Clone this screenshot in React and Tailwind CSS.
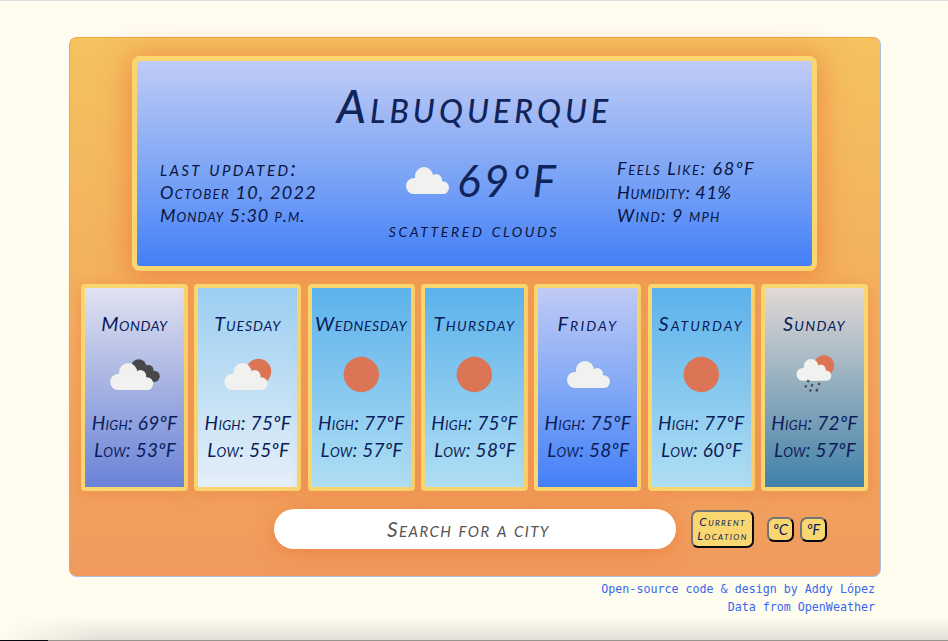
const HAND = "font-['Lato',sans-serif] italic [font-variant-caps:small-caps]";

function CloudShape({ transform }) {
  return (
    <g transform={transform} fill="#f1f1f0">
      <rect x="0" y="11" width="28" height="16" rx="8" />
      <rect x="16" y="14.200" width="27" height="12.800" rx="6.400" />
      <circle cx="18" cy="9" r="9" />
      <circle cx="30.200" cy="12.700" r="5.700" />
      <rect x="9" y="9" width="18" height="14" />
      <rect x="24" y="12.500" width="11.900" height="9" />
    </g>
  );
}

function Cloud() {
  return (
    <svg className="h-[27px] w-[43px]" viewBox="0 0 43 27">
      <CloudShape />
    </svg>
  );
}

function Icon({ kind }) {
  return (
    <svg className="h-[40px] w-[56px]" viewBox="0 0 56 40">
      {kind === "sun" && <circle cx="28.300" cy="20.500" r="17.700" fill="#dc7555" />}
      {kind === "cloud" && <CloudShape transform="translate(7 7)" />}
      {kind === "broken" && (
        <>
          <g fill="#48484a">
            <circle cx="31.800" cy="12.500" r="7.300" />
            <circle cx="41.500" cy="16" r="5" />
            <circle cx="47.200" cy="22.300" r="5.600" />
            <path d="M32 7 43 13 46 27.500 36 24Z" />
          </g>
          <CloudShape transform="translate(3.200 9)" />
        </>
      )}
      {kind === "few" && (
        <>
          <circle cx="38.500" cy="17.500" r="12.700" fill="#dc7555" />
          <CloudShape transform="translate(4.500 9)" />
        </>
      )}
      {kind === "rain" && (
        <>
          <circle cx="38" cy="11.500" r="10.200" fill="#dc7555" />
          <CloudShape transform="translate(10.500 5) scale(.81)" />
          <path
            d="M22.600 26l-.8 2.200M20.300 31.200l-1 2.300M26.500 30.200l-1 2.500M33.500 28.800l-.8 2.200M24.800 35.500l-.8 2M31.300 35l-1 2.500"
            stroke="#48484a"
            strokeWidth="2.200"
          />
        </>
      )}
    </svg>
  );
}

const CLEAR = "from-[#5bb2ec] via-[#86c8ef] to-[#afdef3]";

const DAYS = [
  { name: "Monday", track: "tracking-[0.5px]", icon: "broken", hi: 69, lo: 53, bg: "from-[#e1e3f1] via-[#a5b1e1] to-[#6a83d8]" },
  { name: "Tuesday", track: "tracking-[0.9px]", icon: "few", hi: 75, lo: 55, bg: "from-[#9ccef2] via-[#c0dff4] to-[#e5eff9]" },
  { name: "Wednesday", track: "tracking-[0.6px]", icon: "sun", hi: 77, lo: 57, bg: CLEAR },
  { name: "Thursday", track: "tracking-[1.300px]", icon: "sun", hi: 75, lo: 58, bg: CLEAR },
  { name: "Friday", track: "tracking-[2.100px]", icon: "cloud", hi: 75, lo: 58, bg: "from-[#c0cbf5] via-[#82a8f5] to-[#437ff7]" },
  { name: "Saturday", track: "tracking-[2px]", icon: "sun", hi: 77, lo: 60, bg: CLEAR },
  { name: "Sunday", track: "tracking-[1.300px]", icon: "rain", hi: 72, lo: 57, bg: "from-[#e2d9d6] via-[#91adbe] to-[#3f80a8]" },
];

function DayCard({ day }) {
  return (
    <div
      className={`flex h-[207px] w-[107px] flex-col items-center rounded-[4px] border-4 border-[#f9d66f] bg-linear-to-b pt-[21px] whitespace-nowrap text-[#0b1c5a] shadow-[0_3px_15px_rgba(238,128,64,0.6)] ${day.bg}`}
    >
      <div className={`h-[28px] text-[20px] leading-[28px] ${day.track}`}>{day.name}</div>
      <div className="mt-[17px] h-[40px]">
        <Icon kind={day.icon} />
      </div>
      <div className="mt-[15px] text-[19px] leading-[27px] tracking-[0.3px]">High: {day.hi}ºF</div>
      <div className="pl-[1px] text-[19px] leading-[27px] tracking-[0.3px]">Low: {day.lo}ºF</div>
    </div>
  );
}

const BUTTON =
  "flex items-center justify-center border-2 border-t-[#747474] border-l-[#747474] border-r-[#0a0a12] border-b-[#0a0a12] bg-[#f9d66f] text-[#0b1c5a] [font-variant-caps:small-caps] italic";

export default function App() {
  return (
    <div className="flex h-[641px] w-[948px] flex-col overflow-hidden border-t border-[#dedede] bg-[#fffcf0]">
      <div
        className={`mt-[36px] ml-[69px] flex h-[540px] w-[812px] shrink-0 flex-col rounded-[8px] border border-t-[#f0a546] border-l-[#f0a546] border-r-[#a9c0e0] border-b-[#a9c0e0] bg-linear-to-b from-[#f5c25e] to-[#f09a5e] ${HAND}`}
      >
        <div className="mt-[18px] ml-[62px] flex h-[215px] w-[685px] shrink-0 flex-col rounded-[8px] border-[5px] border-[#f9d66f] bg-linear-to-b from-[#c0cbf5] via-[#82a8f5] to-[#437ff7] whitespace-nowrap text-[#0a1440] shadow-[0_3px_28px_4px_rgba(238,120,60,0.7)]">
          <h1 className="mt-[19px] h-[52px] text-center text-[46px] leading-[52px] font-medium tracking-[4.100px] text-[#10245a]">
            Albuquerque
          </h1>
          <div className="mt-[25px] flex text-[18px] leading-[23.500px]">
            <div className="w-[229px] pl-[23px]">
              <div className="h-[23.500px] text-[21px] leading-[21px] tracking-[2.400px]">last updated:</div>
              <div className="tracking-[1.350px]">October 10, 2022</div>
              <div className="tracking-[1px]">Monday 5:30 p.m.</div>
            </div>
            <div className="flex w-[214px] flex-col items-center">
              <div className="flex h-[46px] items-center gap-[8px] pl-[19px]">
                <Cloud />
                <span className="text-[44px] leading-[46px] tracking-[3.300px] text-[#10245a]">69ºF</span>
              </div>
              <div className="mt-[15px] pl-[2px] text-[20px] tracking-[2.600px]">scattered clouds</div>
            </div>
            <div className="pl-[37px]">
              <div className="tracking-[1.600px]">Feels Like: 68ºF</div>
              <div className="tracking-[0.6px]">Humidity: 41%</div>
              <div className="tracking-[1.200px]">Wind: 9 mph</div>
            </div>
          </div>
        </div>
        <div className="mt-[13px] ml-[11px] flex w-[787px] justify-between">
          {DAYS.map((day) => (
            <DayCard key={day.name} day={day} />
          ))}
        </div>
        <div className="mt-[18px] ml-[204px] flex items-center">
          <input
            placeholder="Search for a city"
            className="h-[40px] w-[402px] rounded-full bg-white pr-[13px] pb-[2px] text-center text-[21px] tracking-[1.400px] text-[#444] italic shadow-[0_3px_20px_rgba(238,120,56,0.7)] [font-variant-caps:small-caps] placeholder:text-[#555]"
          />
          <button className={`ml-[15px] h-[38px] w-[63px] flex-col rounded-[7px] text-[12px] leading-[14px] tracking-[1.400px] ${BUTTON}`}>
            <span>Current</span>
            <span>Location</span>
          </button>
          <button className={`ml-[13px] h-[25px] w-[27px] rounded-[7px] text-[15px] ${BUTTON}`}>ºC</button>
          <button className={`ml-[6px] h-[25px] w-[27px] rounded-[7px] text-[15px] ${BUTTON}`}>ºF</button>
        </div>
      </div>
      <footer className="mt-[4px] pr-[73px] text-right font-['DejaVu_Sans_Mono',monospace] text-[11.670px] leading-[17.500px] text-[#3868ee]">
        <div>Open-source code &amp; design by Addy López</div>
        <div>Data from OpenWeather</div>
      </footer>
      <div className="mt-auto h-[24px] shrink-0 bg-linear-to-b from-[#fffcf0] to-[#e3e0d8]">
        <div className="h-full w-full bg-linear-to-r from-[#fffcf0] via-transparent via-10%" />
      </div>
      <div className="flex h-[2px] shrink-0 bg-[#96938b]">
        <div className="w-[48px] bg-[#0a0612]" />
      </div>
    </div>
  );
}
